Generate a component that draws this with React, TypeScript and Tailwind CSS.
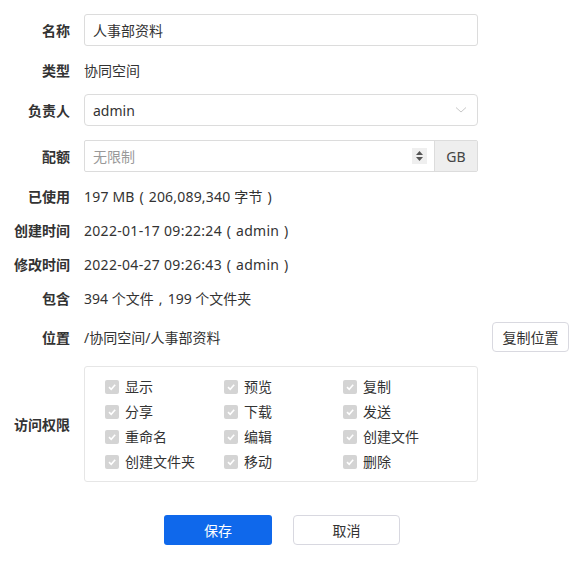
import React from 'react';

const font = { fontFamily: '"Noto Sans", "Noto Sans CJK SC", sans-serif' };

const perms = [
  '显示', '预览', '复制',
  '分享', '下载', '发送',
  '重命名', '编辑', '创建文件',
  '创建文件夹', '移动', '删除',
];

// full-width punctuation drawn centred in its em box
const Fw: React.FC<{ children: React.ReactNode }> = ({ children }) => (
  <span className="inline-block w-[14px] text-center">{children}</span>
);

const Label: React.FC<{ children: React.ReactNode }> = ({ children }) => (
  <div className="w-[70px] shrink-0 text-right font-bold text-[#333]">{children}</div>
);

const Row: React.FC<{ label: string; className?: string; children: React.ReactNode }> = ({
  label,
  className = '',
  children,
}) => (
  <div className={`flex items-center gap-[14px] ${className}`}>
    <Label>{label}</Label>
    {children}
  </div>
);

const CheckBox: React.FC = () => (
  <span className="flex h-[14px] w-[14px] shrink-0 items-center justify-center rounded-[2px] bg-[#d4d4d4]">
    <svg width="10" height="10" viewBox="0 0 10 10">
      <path d="M2 5.2 L4.2 7.3 L8.2 2.8" fill="none" stroke="#fff" strokeWidth="1.6" />
    </svg>
  </span>
);

export default function App() {
  return (
    <div className="h-[562px] w-[581px] bg-white pt-[14px] text-[14px] text-[#333]" style={font}>
      <Row label="名称">
        <div className="flex h-[32px] w-[394px] items-center rounded-[3px] border border-[#dcdcdc] px-[8px]">
          人事部资料
        </div>
      </Row>

      <Row label="类型" className="mt-[8px] h-[32px]">
        <span>协同空间</span>
      </Row>

      <Row label="负责人" className="mt-[8px]">
        <div className="flex h-[32px] w-[394px] items-center justify-between rounded-[4px] border border-[#dcdcdc] pl-[8px] pr-[10px]">
          <span>admin</span>
          <svg width="12" height="8" viewBox="0 0 12 8">
            <path d="M1 1.5 L6 6 L11 1.5" fill="none" stroke="#c8c8c8" strokeWidth="1" />
          </svg>
        </div>
      </Row>

      <Row label="配额" className="mt-[14px]">
        <div className="flex h-[32px] w-[394px] rounded-[2px] border border-[#dcdcdc]">
          <div className="flex flex-1 items-center justify-between pl-[8px] pr-[7px]">
            <span className="text-[#999]">无限制</span>
            <span className="flex h-[16px] w-[15px] flex-col items-center justify-center gap-[2px] bg-[#efefef]">
              <svg width="7" height="4" viewBox="0 0 7 4">
                <path d="M0 4 L3.5 0 L7 4 Z" fill="#555" />
              </svg>
              <svg width="7" height="4" viewBox="0 0 7 4">
                <path d="M0 0 L3.5 4 L7 0 Z" fill="#555" />
              </svg>
            </span>
          </div>
          <div className="flex w-[43px] items-center justify-center border-l border-[#dcdcdc] bg-[#eeeeee] text-[#444]">
            GB
          </div>
        </div>
      </Row>

      <div className="mt-[7px]">
        <Row label="已使用" className="h-[34px]">
          <span className="tracking-[0.2px]">
            197 MB<Fw>(</Fw>206,089,340 字节<Fw>)</Fw>
          </span>
        </Row>
        <Row label="创建时间" className="h-[34px]">
          <span className="tracking-[0.3px]">
            2022-01-17 09:22:24<Fw>(</Fw>admin<Fw>)</Fw>
          </span>
        </Row>
        <Row label="修改时间" className="h-[34px]">
          <span className="tracking-[0.3px]">
            2022-04-27 09:26:43<Fw>(</Fw>admin<Fw>)</Fw>
          </span>
        </Row>
        <Row label="包含" className="h-[34px]">
          <span>
            394 个文件<Fw>,</Fw>199 个文件夹
          </span>
        </Row>
      </div>

      <Row label="位置" className="mt-[7px] h-[30px] pr-[12px]">
        <span className="flex-1">/协同空间/人事部资料</span>
        <button className="h-[30px] w-[77px] rounded-[4px] border border-[#d9d9e0] bg-white text-[14px] text-[#333]">
          复制位置
        </button>
      </Row>

      <Row label="访问权限" className="mt-[14px]">
        <div className="w-[394px] rounded-[3px] border border-[#e6e6e6] pb-[7px] pl-[20px] pt-[7px]">
          <div className="grid grid-cols-[119px_119px_119px]">
            {perms.map((p) => (
              <div key={p} className="flex h-[25px] items-center gap-[6px]">
                <CheckBox />
                <span>{p}</span>
              </div>
            ))}
          </div>
        </div>
      </Row>

      <div className="mt-[33px] flex gap-[21px] pl-[164px]">
        <button className="h-[30px] w-[108px] rounded-[3px] bg-[#0f68eb] text-[14px] text-white">保存</button>
        <button className="h-[30px] w-[107px] rounded-[4px] border border-[#d8d8e0] bg-white text-[14px] text-[#333]">
          取消
        </button>
      </div>
    </div>
  );
}
